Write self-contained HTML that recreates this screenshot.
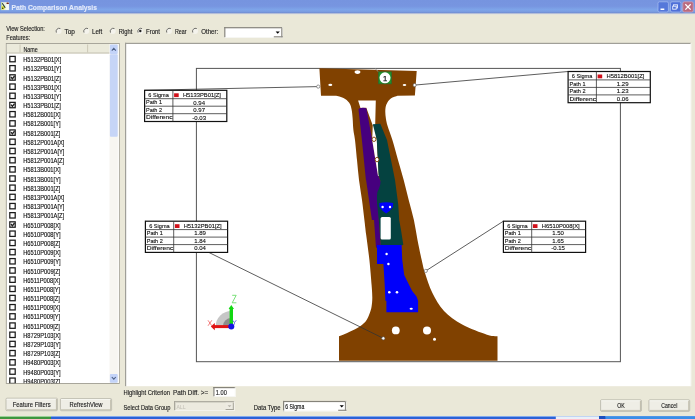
<!DOCTYPE html><html><head><meta charset="utf-8"><style>
html,body{margin:0;padding:0;width:695px;height:419px;overflow:hidden;background:#EAE8D8;}
svg{display:block;font-family:"Liberation Sans", sans-serif;will-change:transform;}
</style></head><body>
<svg width="695" height="419" viewBox="0 0 695 419">
<defs>
<clipPath id="listclip"><rect x="7" y="53.6" width="102.5" height="329.6"/></clipPath>
<clipPath id="panelclip"><rect x="126" y="44" width="565" height="342"/></clipPath>
</defs>
<rect x="0" y="0" width="695" height="419" fill="#EAE8D8"/>

<linearGradient id="tg" x1="0" y1="0" x2="0" y2="1"><stop offset="0" stop-color="#7694DF"/><stop offset="0.45" stop-color="#7795E0"/><stop offset="0.72" stop-color="#7EA5E9"/><stop offset="0.86" stop-color="#7A9CE0"/><stop offset="1" stop-color="#6A84CA"/></linearGradient>
<rect x="0" y="0" width="695" height="13.6" fill="url(#tg)"/>
<rect x="0" y="13.6" width="695" height="0.7" fill="#D8DAE4"/>
<rect x="1.2" y="2.2" width="7.9" height="7.9" fill="#EEF2E0"/><rect x="1.2" y="2.2" width="1" height="7.9" fill="#B8D890"/><ellipse cx="3.2" cy="7.8" rx="1.6" ry="2" fill="#E0E040"/><circle cx="2.7" cy="8.2" r="0.8" fill="#303010"/><path d="M2.3 3.2 L5.2 7.8" stroke="#1E3A30" stroke-width="1.1"/><ellipse cx="7.7" cy="3.3" rx="1.4" ry="0.7" fill="#6A1810"/><rect x="6.2" y="4.5" width="2.6" height="5.3" fill="#F6FCFC"/>
<text x="11.4" y="10.0" font-size="7.2" fill="#E4EAFB" text-anchor="start" font-weight="bold" textLength="85.6" lengthAdjust="spacingAndGlyphs" stroke="#E4EAFB" stroke-width="0.13" >Path Comparison Analysis</text>
<rect x="658" y="1.8" width="10.4" height="10.2" rx="1.5" fill="#5578DA" stroke="#A9BEF0" stroke-width="0.7"/><rect x="660.5" y="8.5" width="3.8" height="1.5" fill="#fff"/>
<rect x="670.5" y="1.8" width="10.4" height="10.2" rx="1.5" fill="#4F70D8" stroke="#A9BEF0" stroke-width="0.7"/><rect x="673.5" y="4.8" width="4" height="3.2" fill="none" stroke="#e8eeff" stroke-width="0.9"/><rect x="672.7" y="6.2" width="3.5" height="3" fill="#4F70D8" stroke="#e8eeff" stroke-width="0.9"/>
<rect x="682.8" y="1.8" width="10.4" height="10.2" rx="1.5" fill="#BA6A7E" stroke="#D0A8C0" stroke-width="0.7"/><path d="M685.3 4.2 L690.7 9.6 M690.7 4.2 L685.3 9.6" stroke="#fff" stroke-width="1.3"/>
<text x="6.2" y="31.2" font-size="6.6" fill="#222" text-anchor="start" font-weight="normal" textLength="38.7" lengthAdjust="spacingAndGlyphs" stroke="#222" stroke-width="0.13" >View Selection:</text>
<text x="6.2" y="40.3" font-size="6.6" fill="#222" text-anchor="start" font-weight="normal" textLength="24" lengthAdjust="spacingAndGlyphs" stroke="#222" stroke-width="0.13" >Features:</text>
<circle cx="58.6" cy="31" r="3.0" fill="#F4F3EC"/><path d="M56.4 32.6 A3.0 3.0 0 0 1 60.4 28.6" stroke="#6E6E68" stroke-width="1.0" fill="none"/>
<text x="64.4" y="33.6" font-size="6.6" fill="#222" text-anchor="start" font-weight="normal" textLength="10.5" lengthAdjust="spacingAndGlyphs" stroke="#222" stroke-width="0.13" >Top</text>
<circle cx="86.2" cy="31" r="3.0" fill="#F4F3EC"/><path d="M84.0 32.6 A3.0 3.0 0 0 1 88.0 28.6" stroke="#6E6E68" stroke-width="1.0" fill="none"/>
<text x="92" y="33.6" font-size="6.6" fill="#222" text-anchor="start" font-weight="normal" textLength="10.3" lengthAdjust="spacingAndGlyphs" stroke="#222" stroke-width="0.13" >Left</text>
<circle cx="112.7" cy="31" r="3.0" fill="#F4F3EC"/><path d="M110.5 32.6 A3.0 3.0 0 0 1 114.5 28.6" stroke="#6E6E68" stroke-width="1.0" fill="none"/>
<text x="118.8" y="33.6" font-size="6.6" fill="#222" text-anchor="start" font-weight="normal" textLength="13.5" lengthAdjust="spacingAndGlyphs" stroke="#222" stroke-width="0.13" >Right</text>
<circle cx="140.3" cy="31" r="3.0" fill="#F4F3EC"/><path d="M138.10000000000002 32.6 A3.0 3.0 0 0 1 142.10000000000002 28.6" stroke="#6E6E68" stroke-width="1.0" fill="none"/>
<text x="146" y="33.6" font-size="6.6" fill="#222" text-anchor="start" font-weight="normal" textLength="14" lengthAdjust="spacingAndGlyphs" stroke="#222" stroke-width="0.13" >Front</text>
<circle cx="169" cy="31" r="3.0" fill="#F4F3EC"/><path d="M166.8 32.6 A3.0 3.0 0 0 1 170.8 28.6" stroke="#6E6E68" stroke-width="1.0" fill="none"/>
<text x="174.9" y="33.6" font-size="6.6" fill="#222" text-anchor="start" font-weight="normal" textLength="11.6" lengthAdjust="spacingAndGlyphs" stroke="#222" stroke-width="0.13" >Rear</text>
<circle cx="195" cy="31" r="3.0" fill="#F4F3EC"/><path d="M192.8 32.6 A3.0 3.0 0 0 1 196.8 28.6" stroke="#6E6E68" stroke-width="1.0" fill="none"/>
<text x="201.2" y="33.6" font-size="6.6" fill="#222" text-anchor="start" font-weight="normal" textLength="17" lengthAdjust="spacingAndGlyphs" stroke="#222" stroke-width="0.13" >Other:</text>
<circle cx="140.3" cy="31" r="1.2" fill="#222"/>
<rect x="224.2" y="27.1" width="58.60000000000002" height="10.699999999999996" fill="#fff"/>
<rect x="224.2" y="27.1" width="58.60000000000002" height="1.2" fill="#85837A"/><rect x="224.2" y="27.1" width="1.2" height="10.699999999999996" fill="#85837A"/>
<rect x="224.2" y="37.0" width="58.60000000000002" height="0.8" fill="#F6F5F0"/><rect x="282.0" y="27.1" width="0.8" height="10.699999999999996" fill="#F6F5F0"/>
<rect x="273.8" y="36.199999999999996" width="9.0" height="1.2" fill="#8E8C84"/><rect x="281.2" y="28.1" width="1.2" height="9.099999999999996" fill="#8E8C84"/>
<path d="M275.59999999999997 31.550000000000004 L279.8 31.550000000000004 L277.7 33.85 Z" fill="#000"/>
<rect x="6.3" y="43.5" width="113" height="340" fill="#fff" stroke="#A09E92" stroke-width="0.9"/>
<rect x="6.8" y="44" width="103" height="9.4" fill="#EBEADB"/>
<rect x="6.8" y="52.4" width="103" height="1.2" fill="#CBC7B8"/>
<rect x="19.6" y="44.5" width="0.9" height="8" fill="#C9C5B4"/><rect x="87.2" y="44.5" width="0.9" height="8" fill="#C9C5B4"/>
<text x="23.4" y="51.6" font-size="6.6" fill="#222" text-anchor="start" font-weight="normal" textLength="14.3" lengthAdjust="spacingAndGlyphs" stroke="#222" stroke-width="0.13" >Name</text>
<g clip-path="url(#listclip)">
<rect x="9.8" y="56.40" width="5.4" height="5.4" fill="#fff" stroke="#1A1A1A" stroke-width="1.25"/>
<text x="23.2" y="62.15" font-size="6.5" fill="#111" text-anchor="start" font-weight="normal" textLength="38.07" lengthAdjust="spacingAndGlyphs" stroke="#111" stroke-width="0.13" >H5132PB01[X]</text>
<rect x="9.8" y="65.59" width="5.4" height="5.4" fill="#fff" stroke="#1A1A1A" stroke-width="1.25"/>
<text x="23.2" y="71.34" font-size="6.5" fill="#111" text-anchor="start" font-weight="normal" textLength="38.07" lengthAdjust="spacingAndGlyphs" stroke="#111" stroke-width="0.13" >H5132PB01[Y]</text>
<rect x="9.8" y="74.78" width="5.4" height="5.4" fill="#fff" stroke="#1A1A1A" stroke-width="1.25"/>
<path d="M11.0 76.98 L12.4 78.78 L14.5 75.98" stroke="#222" stroke-width="1.35" fill="none"/>
<text x="23.2" y="80.53" font-size="6.5" fill="#111" text-anchor="start" font-weight="normal" textLength="37.75" lengthAdjust="spacingAndGlyphs" stroke="#111" stroke-width="0.13" >H5132PB01[Z]</text>
<rect x="9.8" y="83.97" width="5.4" height="5.4" fill="#fff" stroke="#1A1A1A" stroke-width="1.25"/>
<text x="23.2" y="89.72" font-size="6.5" fill="#111" text-anchor="start" font-weight="normal" textLength="38.07" lengthAdjust="spacingAndGlyphs" stroke="#111" stroke-width="0.13" >H5133PB01[X]</text>
<rect x="9.8" y="93.16" width="5.4" height="5.4" fill="#fff" stroke="#1A1A1A" stroke-width="1.25"/>
<text x="23.2" y="98.91" font-size="6.5" fill="#111" text-anchor="start" font-weight="normal" textLength="38.07" lengthAdjust="spacingAndGlyphs" stroke="#111" stroke-width="0.13" >H5133PB01[Y]</text>
<rect x="9.8" y="102.35" width="5.4" height="5.4" fill="#fff" stroke="#1A1A1A" stroke-width="1.25"/>
<path d="M11.0 104.55 L12.4 106.35 L14.5 103.55" stroke="#222" stroke-width="1.35" fill="none"/>
<text x="23.2" y="108.10" font-size="6.5" fill="#111" text-anchor="start" font-weight="normal" textLength="37.75" lengthAdjust="spacingAndGlyphs" stroke="#111" stroke-width="0.13" >H5133PB01[Z]</text>
<rect x="9.8" y="111.54" width="5.4" height="5.4" fill="#fff" stroke="#1A1A1A" stroke-width="1.25"/>
<text x="23.2" y="117.29" font-size="6.5" fill="#111" text-anchor="start" font-weight="normal" textLength="37.43" lengthAdjust="spacingAndGlyphs" stroke="#111" stroke-width="0.13" >H5812B001[X]</text>
<rect x="9.8" y="120.73" width="5.4" height="5.4" fill="#fff" stroke="#1A1A1A" stroke-width="1.25"/>
<text x="23.2" y="126.48" font-size="6.5" fill="#111" text-anchor="start" font-weight="normal" textLength="37.43" lengthAdjust="spacingAndGlyphs" stroke="#111" stroke-width="0.13" >H5812B001[Y]</text>
<rect x="9.8" y="129.92" width="5.4" height="5.4" fill="#fff" stroke="#1A1A1A" stroke-width="1.25"/>
<path d="M11.0 132.12 L12.4 133.92 L14.5 131.12" stroke="#222" stroke-width="1.35" fill="none"/>
<text x="23.2" y="135.67" font-size="6.5" fill="#111" text-anchor="start" font-weight="normal" textLength="37.11" lengthAdjust="spacingAndGlyphs" stroke="#111" stroke-width="0.13" >H5812B001[Z]</text>
<rect x="9.8" y="139.11" width="5.4" height="5.4" fill="#fff" stroke="#1A1A1A" stroke-width="1.25"/>
<text x="23.2" y="144.86" font-size="6.5" fill="#111" text-anchor="start" font-weight="normal" textLength="41.27" lengthAdjust="spacingAndGlyphs" stroke="#111" stroke-width="0.13" >H5812P001A[X]</text>
<rect x="9.8" y="148.30" width="5.4" height="5.4" fill="#fff" stroke="#1A1A1A" stroke-width="1.25"/>
<text x="23.2" y="154.05" font-size="6.5" fill="#111" text-anchor="start" font-weight="normal" textLength="41.27" lengthAdjust="spacingAndGlyphs" stroke="#111" stroke-width="0.13" >H5812P001A[Y]</text>
<rect x="9.8" y="157.49" width="5.4" height="5.4" fill="#fff" stroke="#1A1A1A" stroke-width="1.25"/>
<text x="23.2" y="163.24" font-size="6.5" fill="#111" text-anchor="start" font-weight="normal" textLength="40.95" lengthAdjust="spacingAndGlyphs" stroke="#111" stroke-width="0.13" >H5812P001A[Z]</text>
<rect x="9.8" y="166.68" width="5.4" height="5.4" fill="#fff" stroke="#1A1A1A" stroke-width="1.25"/>
<text x="23.2" y="172.43" font-size="6.5" fill="#111" text-anchor="start" font-weight="normal" textLength="37.43" lengthAdjust="spacingAndGlyphs" stroke="#111" stroke-width="0.13" >H5813B001[X]</text>
<rect x="9.8" y="175.87" width="5.4" height="5.4" fill="#fff" stroke="#1A1A1A" stroke-width="1.25"/>
<text x="23.2" y="181.62" font-size="6.5" fill="#111" text-anchor="start" font-weight="normal" textLength="37.43" lengthAdjust="spacingAndGlyphs" stroke="#111" stroke-width="0.13" >H5813B001[Y]</text>
<rect x="9.8" y="185.06" width="5.4" height="5.4" fill="#fff" stroke="#1A1A1A" stroke-width="1.25"/>
<text x="23.2" y="190.81" font-size="6.5" fill="#111" text-anchor="start" font-weight="normal" textLength="37.11" lengthAdjust="spacingAndGlyphs" stroke="#111" stroke-width="0.13" >H5813B001[Z]</text>
<rect x="9.8" y="194.25" width="5.4" height="5.4" fill="#fff" stroke="#1A1A1A" stroke-width="1.25"/>
<text x="23.2" y="200.00" font-size="6.5" fill="#111" text-anchor="start" font-weight="normal" textLength="41.27" lengthAdjust="spacingAndGlyphs" stroke="#111" stroke-width="0.13" >H5813P001A[X]</text>
<rect x="9.8" y="203.44" width="5.4" height="5.4" fill="#fff" stroke="#1A1A1A" stroke-width="1.25"/>
<text x="23.2" y="209.19" font-size="6.5" fill="#111" text-anchor="start" font-weight="normal" textLength="41.27" lengthAdjust="spacingAndGlyphs" stroke="#111" stroke-width="0.13" >H5813P001A[Y]</text>
<rect x="9.8" y="212.63" width="5.4" height="5.4" fill="#fff" stroke="#1A1A1A" stroke-width="1.25"/>
<text x="23.2" y="218.38" font-size="6.5" fill="#111" text-anchor="start" font-weight="normal" textLength="40.95" lengthAdjust="spacingAndGlyphs" stroke="#111" stroke-width="0.13" >H5813P001A[Z]</text>
<rect x="9.8" y="221.82" width="5.4" height="5.4" fill="#fff" stroke="#1A1A1A" stroke-width="1.25"/>
<path d="M11.0 224.02 L12.4 225.82 L14.5 223.02" stroke="#222" stroke-width="1.35" fill="none"/>
<text x="23.2" y="227.57" font-size="6.5" fill="#111" text-anchor="start" font-weight="normal" textLength="37.43" lengthAdjust="spacingAndGlyphs" stroke="#111" stroke-width="0.13" >H6510P008[X]</text>
<rect x="9.8" y="231.01" width="5.4" height="5.4" fill="#fff" stroke="#1A1A1A" stroke-width="1.25"/>
<text x="23.2" y="236.76" font-size="6.5" fill="#111" text-anchor="start" font-weight="normal" textLength="37.43" lengthAdjust="spacingAndGlyphs" stroke="#111" stroke-width="0.13" >H6510P008[Y]</text>
<rect x="9.8" y="240.20" width="5.4" height="5.4" fill="#fff" stroke="#1A1A1A" stroke-width="1.25"/>
<text x="23.2" y="245.95" font-size="6.5" fill="#111" text-anchor="start" font-weight="normal" textLength="37.11" lengthAdjust="spacingAndGlyphs" stroke="#111" stroke-width="0.13" >H6510P008[Z]</text>
<rect x="9.8" y="249.39" width="5.4" height="5.4" fill="#fff" stroke="#1A1A1A" stroke-width="1.25"/>
<text x="23.2" y="255.14" font-size="6.5" fill="#111" text-anchor="start" font-weight="normal" textLength="37.43" lengthAdjust="spacingAndGlyphs" stroke="#111" stroke-width="0.13" >H6510P009[X]</text>
<rect x="9.8" y="258.58" width="5.4" height="5.4" fill="#fff" stroke="#1A1A1A" stroke-width="1.25"/>
<text x="23.2" y="264.33" font-size="6.5" fill="#111" text-anchor="start" font-weight="normal" textLength="37.43" lengthAdjust="spacingAndGlyphs" stroke="#111" stroke-width="0.13" >H6510P009[Y]</text>
<rect x="9.8" y="267.77" width="5.4" height="5.4" fill="#fff" stroke="#1A1A1A" stroke-width="1.25"/>
<text x="23.2" y="273.52" font-size="6.5" fill="#111" text-anchor="start" font-weight="normal" textLength="37.11" lengthAdjust="spacingAndGlyphs" stroke="#111" stroke-width="0.13" >H6510P009[Z]</text>
<rect x="9.8" y="276.96" width="5.4" height="5.4" fill="#fff" stroke="#1A1A1A" stroke-width="1.25"/>
<text x="23.2" y="282.71" font-size="6.5" fill="#111" text-anchor="start" font-weight="normal" textLength="37.01" lengthAdjust="spacingAndGlyphs" stroke="#111" stroke-width="0.13" >H6511P008[X]</text>
<rect x="9.8" y="286.15" width="5.4" height="5.4" fill="#fff" stroke="#1A1A1A" stroke-width="1.25"/>
<text x="23.2" y="291.90" font-size="6.5" fill="#111" text-anchor="start" font-weight="normal" textLength="37.01" lengthAdjust="spacingAndGlyphs" stroke="#111" stroke-width="0.13" >H6511P008[Y]</text>
<rect x="9.8" y="295.34" width="5.4" height="5.4" fill="#fff" stroke="#1A1A1A" stroke-width="1.25"/>
<text x="23.2" y="301.09" font-size="6.5" fill="#111" text-anchor="start" font-weight="normal" textLength="36.68" lengthAdjust="spacingAndGlyphs" stroke="#111" stroke-width="0.13" >H6511P008[Z]</text>
<rect x="9.8" y="304.53" width="5.4" height="5.4" fill="#fff" stroke="#1A1A1A" stroke-width="1.25"/>
<text x="23.2" y="310.28" font-size="6.5" fill="#111" text-anchor="start" font-weight="normal" textLength="37.01" lengthAdjust="spacingAndGlyphs" stroke="#111" stroke-width="0.13" >H6511P009[X]</text>
<rect x="9.8" y="313.72" width="5.4" height="5.4" fill="#fff" stroke="#1A1A1A" stroke-width="1.25"/>
<text x="23.2" y="319.47" font-size="6.5" fill="#111" text-anchor="start" font-weight="normal" textLength="37.01" lengthAdjust="spacingAndGlyphs" stroke="#111" stroke-width="0.13" >H6511P009[Y]</text>
<rect x="9.8" y="322.91" width="5.4" height="5.4" fill="#fff" stroke="#1A1A1A" stroke-width="1.25"/>
<text x="23.2" y="328.66" font-size="6.5" fill="#111" text-anchor="start" font-weight="normal" textLength="36.68" lengthAdjust="spacingAndGlyphs" stroke="#111" stroke-width="0.13" >H6511P009[Z]</text>
<rect x="9.8" y="332.10" width="5.4" height="5.4" fill="#fff" stroke="#1A1A1A" stroke-width="1.25"/>
<text x="23.2" y="337.85" font-size="6.5" fill="#111" text-anchor="start" font-weight="normal" textLength="37.43" lengthAdjust="spacingAndGlyphs" stroke="#111" stroke-width="0.13" >H8729P103[X]</text>
<rect x="9.8" y="341.29" width="5.4" height="5.4" fill="#fff" stroke="#1A1A1A" stroke-width="1.25"/>
<text x="23.2" y="347.04" font-size="6.5" fill="#111" text-anchor="start" font-weight="normal" textLength="37.43" lengthAdjust="spacingAndGlyphs" stroke="#111" stroke-width="0.13" >H8729P103[Y]</text>
<rect x="9.8" y="350.48" width="5.4" height="5.4" fill="#fff" stroke="#1A1A1A" stroke-width="1.25"/>
<text x="23.2" y="356.23" font-size="6.5" fill="#111" text-anchor="start" font-weight="normal" textLength="37.11" lengthAdjust="spacingAndGlyphs" stroke="#111" stroke-width="0.13" >H8729P103[Z]</text>
<rect x="9.8" y="359.67" width="5.4" height="5.4" fill="#fff" stroke="#1A1A1A" stroke-width="1.25"/>
<text x="23.2" y="365.42" font-size="6.5" fill="#111" text-anchor="start" font-weight="normal" textLength="37.43" lengthAdjust="spacingAndGlyphs" stroke="#111" stroke-width="0.13" >H9480P003[X]</text>
<rect x="9.8" y="368.86" width="5.4" height="5.4" fill="#fff" stroke="#1A1A1A" stroke-width="1.25"/>
<text x="23.2" y="374.61" font-size="6.5" fill="#111" text-anchor="start" font-weight="normal" textLength="37.43" lengthAdjust="spacingAndGlyphs" stroke="#111" stroke-width="0.13" >H9480P003[Y]</text>
<rect x="9.8" y="378.05" width="5.4" height="5.4" fill="#fff" stroke="#1A1A1A" stroke-width="1.25"/>
<text x="23.2" y="383.80" font-size="6.5" fill="#111" text-anchor="start" font-weight="normal" textLength="37.11" lengthAdjust="spacingAndGlyphs" stroke="#111" stroke-width="0.13" >H9480P003[Z]</text>
</g>
<rect x="109.5" y="44.3" width="9.5" height="338.7" fill="#F7F6F1"/>
<rect x="117.6" y="44.3" width="1.4" height="338.7" fill="#FBFBF8"/>
<rect x="109.9" y="44.6" width="7.8" height="9.4" rx="1" fill="#C3D3F8"/><path d="M111.8 50.6 L113.8 48.4 L115.8 50.6" stroke="#4D6185" stroke-width="1.1" fill="none"/>
<rect x="109.9" y="54.2" width="7.8" height="82.6" rx="1" fill="#C6D5F7"/>
<rect x="109.9" y="374" width="7.8" height="8.8" rx="1" fill="#C3D3F8"/><path d="M111.8 377 L113.8 379.2 L115.8 377" stroke="#4D6185" stroke-width="1.1" fill="none"/>
<rect x="125" y="43" width="566" height="343.2" fill="#fff"/>
<rect x="125" y="42.8" width="566" height="1.2" fill="#A09F98"/><rect x="125" y="42.8" width="1.2" height="343.4" fill="#A09F98"/>
<rect x="690.5" y="43" width="1" height="343.2" fill="#F4F3EE"/>
<rect x="6" y="398.2" width="51.4" height="12.5" rx="1" fill="#EFEEE6" stroke="#A3A195" stroke-width="0.6"/>
<rect x="6.6" y="398.8" width="50.199999999999996" height="0.8" fill="#FBFBF6"/>
<rect x="6.6" y="409.2" width="50.199999999999996" height="1.2" fill="#C9C6B6"/>
<rect x="55.9" y="399.0" width="1.2" height="11.3" fill="#C2BFAF"/>
<text x="31.7" y="406.75" font-size="6.5" fill="#222" text-anchor="middle" font-weight="normal" textLength="37.9" lengthAdjust="spacingAndGlyphs" stroke="#222" stroke-width="0.13" >Feature Filters</text>
<rect x="60.4" y="398.6" width="51.199999999999996" height="12.099999999999966" rx="1" fill="#EFEEE6" stroke="#A3A195" stroke-width="0.6"/>
<rect x="61.0" y="399.20000000000005" width="49.99999999999999" height="0.8" fill="#FBFBF6"/>
<rect x="61.0" y="409.2" width="49.99999999999999" height="1.2" fill="#C9C6B6"/>
<rect x="110.1" y="399.40000000000003" width="1.2" height="10.899999999999967" fill="#C2BFAF"/>
<text x="86.0" y="406.95" font-size="6.5" fill="#222" text-anchor="middle" font-weight="normal" textLength="32.8" lengthAdjust="spacingAndGlyphs" stroke="#222" stroke-width="0.13" >RefreshView</text>
<rect x="600.6" y="399.8" width="40.799999999999955" height="11.599999999999966" rx="1" fill="#EFEEE6" stroke="#A3A195" stroke-width="0.6"/>
<rect x="601.2" y="400.40000000000003" width="39.59999999999995" height="0.8" fill="#FBFBF6"/>
<rect x="601.2" y="409.9" width="39.59999999999995" height="1.2" fill="#C9C6B6"/>
<rect x="639.9" y="400.6" width="1.2" height="10.399999999999967" fill="#C2BFAF"/>
<text x="621.0" y="407.90000000000003" font-size="6.5" fill="#222" text-anchor="middle" font-weight="normal" textLength="7.5" lengthAdjust="spacingAndGlyphs" stroke="#222" stroke-width="0.13" >OK</text>
<rect x="648.9" y="399.8" width="40.80000000000007" height="11.599999999999966" rx="1" fill="#EFEEE6" stroke="#A3A195" stroke-width="0.6"/>
<rect x="649.5" y="400.40000000000003" width="39.600000000000065" height="0.8" fill="#FBFBF6"/>
<rect x="649.5" y="409.9" width="39.600000000000065" height="1.2" fill="#C9C6B6"/>
<rect x="688.2" y="400.6" width="1.2" height="10.399999999999967" fill="#C2BFAF"/>
<text x="669.3" y="407.90000000000003" font-size="6.5" fill="#222" text-anchor="middle" font-weight="normal" textLength="16" lengthAdjust="spacingAndGlyphs" stroke="#222" stroke-width="0.13" >Cancel</text>
<text x="123.5" y="394.6" font-size="6.6" fill="#222" text-anchor="start" font-weight="normal" textLength="46.4" lengthAdjust="spacingAndGlyphs" stroke="#222" stroke-width="0.13" >Highlight Criterion</text>
<text x="173" y="394.6" font-size="6.6" fill="#222" text-anchor="start" font-weight="normal" textLength="35.3" lengthAdjust="spacingAndGlyphs" stroke="#222" stroke-width="0.13" >Path Diff. &gt;=</text>
<rect x="213.3" y="387" width="22.299999999999983" height="9.800000000000011" fill="#fff"/>
<rect x="213.3" y="387" width="22.299999999999983" height="1.2" fill="#85837A"/><rect x="213.3" y="387" width="1.2" height="9.800000000000011" fill="#85837A"/>
<rect x="213.3" y="396.0" width="22.299999999999983" height="0.8" fill="#F6F5F0"/><rect x="234.79999999999998" y="387" width="0.8" height="9.800000000000011" fill="#F6F5F0"/>
<text x="215.8" y="394.5" font-size="6.6" fill="#222" text-anchor="start" font-weight="normal" textLength="11" lengthAdjust="spacingAndGlyphs" stroke="#222" stroke-width="0.13" >1.00</text>
<text x="123.5" y="409.7" font-size="6.6" fill="#222" text-anchor="start" font-weight="normal" textLength="46.9" lengthAdjust="spacingAndGlyphs" stroke="#222" stroke-width="0.13" >Select Data Group</text>
<rect x="174" y="401.1" width="60.5" height="9.8" fill="#ECEADF"/>
<rect x="174" y="401.1" width="60.5" height="1.1" fill="#A9A79C"/><rect x="174" y="401.1" width="1.1" height="9.8" fill="#A9A79C"/>
<rect x="175.2" y="402.3" width="58.4" height="0.7" fill="#D2D0C4"/><rect x="175.2" y="402.3" width="0.7" height="8" fill="#D2D0C4"/>
<rect x="174" y="410.3" width="60.5" height="0.7" fill="#F8F7F2"/><rect x="233.9" y="401.1" width="0.7" height="9.8" fill="#F8F7F2"/>
<rect x="225.6" y="402.6" width="7.6" height="7.2" fill="#EDEBE2"/><rect x="225.6" y="409" width="8" height="1" fill="#A5A398"/><rect x="232.8" y="402.6" width="1" height="7.4" fill="#A5A398"/>
<path d="M227.6 405.2 L231.4 405.2 L229.5 407.3 Z" fill="#B8B6AC"/>
<text x="176.5" y="408.6" font-size="6.0" fill="#C8C6BC" text-anchor="start" font-weight="normal" textLength="9" lengthAdjust="spacingAndGlyphs" stroke="#C8C6BC" stroke-width="0.13" >ALL</text>
<text x="253.7" y="409.6" font-size="6.6" fill="#222" text-anchor="start" font-weight="normal" textLength="26.9" lengthAdjust="spacingAndGlyphs" stroke="#222" stroke-width="0.13" >Data Type</text>
<rect x="283" y="400.9" width="63.5" height="10.400000000000034" fill="#fff"/>
<rect x="283" y="400.9" width="63.5" height="1.2" fill="#85837A"/><rect x="283" y="400.9" width="1.2" height="10.400000000000034" fill="#85837A"/>
<rect x="283" y="410.5" width="63.5" height="0.8" fill="#F6F5F0"/><rect x="345.7" y="400.9" width="0.8" height="10.400000000000034" fill="#F6F5F0"/>
<rect x="338.2" y="409.7" width="8.300000000000011" height="1.2" fill="#8E8C84"/><rect x="344.9" y="401.9" width="1.2" height="8.800000000000034" fill="#8E8C84"/>
<path d="M339.65 405.20000000000005 L343.85 405.20000000000005 L341.75 407.5 Z" fill="#000"/>
<text x="285.3" y="408.8" font-size="6.3" fill="#111" text-anchor="start" font-weight="normal" textLength="19" lengthAdjust="spacingAndGlyphs" stroke="#111" stroke-width="0.13" >6 Sigma</text>
<rect x="0" y="416" width="695" height="3" fill="#2C62D6"/>
<rect x="0" y="416" width="695" height="0.9" fill="#8DB2F0"/>
<rect x="0" y="416" width="51" height="3" fill="#3E963E"/><rect x="0" y="416" width="51" height="0.9" fill="#A6D8A2"/>
<rect x="555.8" y="416.4" width="43.2" height="2.6" fill="#EAF0F8"/><rect x="599" y="416" width="6.5" height="3" fill="#1B4FBF"/><rect x="605.5" y="416.3" width="89.5" height="2.7" fill="#3A8EE6"/>
<g clip-path="url(#panelclip)">
<rect x="196.4" y="68.4" width="424" height="293.3" fill="none" stroke="#555" stroke-width="1"/>
<path d="M319.4 68.3 L416.7 71.1 L414.9 95.5 L397.5 95.8 C396.38 96.25 392.63 97.10 390.8 98.5 C388.97 99.90 387.42 102.13 386.5 104.2 C385.58 106.27 385.40 108.52 385.3 110.9 C385.20 113.28 385.52 115.98 385.9 118.5 C386.28 121.02 386.52 122.42 387.6 126 C388.68 129.58 390.67 134.33 392.4 140 C394.13 145.67 396.12 153.33 398 160 C399.88 166.67 401.92 173.33 403.7 180 C405.48 186.67 407.00 193.33 408.7 200 C410.40 206.67 412.43 213.33 413.9 220 C415.37 226.67 416.20 233.33 417.5 240 C418.80 246.67 420.45 254.50 421.7 260 C422.95 265.50 423.23 267.55 425 273 C426.77 278.45 429.13 286.37 432.3 292.7 C435.47 299.03 439.02 305.68 444 311 C448.98 316.32 455.03 320.63 462.2 324.6 C469.37 328.57 481.12 332.87 487 334.8 C492.88 336.73 495.75 335.97 497.5 336.2 L497.5 360.8 L339 360.8 L339 336.2 C340.37 335.67 344.15 334.37 347.2 333 C350.25 331.63 354.67 329.50 357.3 328 C359.93 326.50 361.45 325.33 363 324 C364.55 322.67 365.47 321.83 366.6 320 C367.73 318.17 368.98 315.17 369.8 313 C370.62 310.83 371.08 309.50 371.5 307 C371.92 304.50 372.28 301.67 372.3 298 C372.32 294.33 372.08 291.33 371.6 285 C371.12 278.67 370.30 268.33 369.4 260 C368.50 251.67 367.03 241.67 366.2 235 C365.37 228.33 365.10 225.83 364.4 220 C363.70 214.17 362.90 206.67 362 200 C361.10 193.33 359.83 186.67 359 180 C358.17 173.33 357.67 166.67 357 160 C356.33 153.33 355.60 145.00 355 140 C354.40 135.00 353.80 133.67 353.4 130 C353.00 126.33 352.90 121.42 352.6 118 C352.30 114.58 352.17 112.03 351.6 109.5 C351.03 106.97 350.55 104.72 349.2 102.8 C347.85 100.88 345.70 99.18 343.5 98 C341.30 96.82 337.25 96.08 336 95.7 L321 95.7 Z" fill="#804100"/>
<path d="M358.1 100.5 L375.8 100.5 L375.2 124.5 L372.6 125 L366.3 107.7 L360.5 108.1 Z" fill="#fff"/>
<path d="M358.5 109.5 Q358.9 107.9 362.4 107.7 Q366 107.5 366.5 108.8 L372.2 140 L378 175 L381.5 183 L379 193 L378.8 220 L381 247.7 L376 247.7 L374 220 L371.9 220 L369 200 L366.1 180 L365.9 180 L361.9 140 Z" fill="#46007E"/>
<path d="M372.8 124.2 L375.5 124 L376.8 140 L378.8 176 L378 176 L372.2 140 Z" fill="#fff"/>
<path d="M372.8 124.2 L380.3 123.7 L387 140 L395 180 L398.3 205 L399.2 220 L401 230 L403.3 244.7 Q392 250.8 380.9 246.3 L378.8 220 L377.2 205 Q376.6 196 377.4 192 Q380.6 186 380.5 181 L378.6 175 L376.8 140 Z" fill="#044240"/>
<ellipse cx="374" cy="139.3" rx="1.9" ry="2.2" fill="#fff" stroke="#804100" stroke-width="0.9"/>
<ellipse cx="377" cy="159.6" rx="1.9" ry="2.2" fill="#fff" stroke="#804100" stroke-width="0.9"/>
<path d="M379.3 203 Q386 201.5 393.2 203 L393 207 Q390 211 386.2 213.4 Q382 211 379.5 207 Z" fill="#0000FA"/>
<circle cx="382.6" cy="207" r="1.2" fill="#fff"/><circle cx="390" cy="207" r="1.2" fill="#fff"/>
<rect x="380.6" y="217" width="10.2" height="22.6" rx="1.5" fill="#fff"/>
<path d="M377 245 L401.6 245 L402.2 259.5 L404.2 275 L406.9 280.4 L409.5 285.7 L412.2 291.1 L416.5 296.5 L418.1 300.8 L418.1 312.3 L386.4 312.3 L386.4 300.8 L385.4 300.8 L384.6 283 L383.4 264 L377 264 Z" fill="#0000FA"/>
<ellipse cx="386.6" cy="254" rx="1.2" ry="1.2" fill="#fff"/>
<ellipse cx="388.4" cy="264" rx="1.2" ry="1.2" fill="#fff"/>
<ellipse cx="389.3" cy="292.2" rx="1.3" ry="1.3" fill="#fff"/>
<ellipse cx="397" cy="292.2" rx="1.3" ry="1.3" fill="#fff"/>
<ellipse cx="411.2" cy="308.7" rx="1.6" ry="1.0" fill="#fff"/>
<ellipse cx="357.5" cy="72.1" rx="2.9" ry="1.8" fill="#fff"/>
<ellipse cx="330.3" cy="84.9" rx="2.0" ry="1.1" fill="#fff"/>
<ellipse cx="404.5" cy="85.1" rx="1.8" ry="1.0" fill="#fff"/>
<ellipse cx="395.8" cy="330.4" rx="3.9" ry="3.9" fill="#fff"/>
<ellipse cx="427" cy="330.6" rx="4" ry="4" fill="#fff"/>
<ellipse cx="434.5" cy="339.2" rx="1.5" ry="1.5" fill="#fff"/>
<line x1="144.6" y1="90.3" x2="318.2" y2="86.6" stroke="#333" stroke-width="0.8"/>
<line x1="414.6" y1="85.1" x2="568.1" y2="71.5" stroke="#333" stroke-width="0.8"/>
<line x1="145.4" y1="221.2" x2="383.3" y2="338.3" stroke="#333" stroke-width="0.8"/>
<line x1="425.8" y1="270.9" x2="503.4" y2="221.2" stroke="#333" stroke-width="0.8"/>
<circle cx="318.2" cy="86.6" r="1.6" fill="#fff" stroke="#555" stroke-width="0.6"/>
<circle cx="414.6" cy="85.1" r="1.6" fill="#fff" stroke="#555" stroke-width="0.6"/>
<circle cx="383.3" cy="338.3" r="1.6" fill="#fff" stroke="#555" stroke-width="0.6"/>
<circle cx="425.8" cy="270.9" r="1.6" fill="#fff" stroke="#555" stroke-width="0.6"/>
<line x1="378.5" y1="71.8" x2="375" y2="68.5" stroke="#999" stroke-width="0.8"/>
<rect x="378.6" y="71.9" width="12.8" height="11.9" fill="#20922A" stroke="#2C6A2E" stroke-width="0.8"/>
<circle cx="385" cy="77.85" r="5.5" fill="#fff"/>
<text x="385.1" y="80.7" font-size="7.6" text-anchor="middle" fill="#222" stroke="#222" stroke-width="0.25">1</text>
<rect x="144.6" y="90.3" width="82.2" height="31.2" fill="#fff" stroke="#111" stroke-width="1.2"/>
<line x1="144.6" y1="98.7" x2="226.8" y2="98.7" stroke="#333" stroke-width="0.8"/>
<line x1="144.6" y1="106.2" x2="226.8" y2="106.2" stroke="#333" stroke-width="0.8"/>
<line x1="144.6" y1="113.69999999999999" x2="226.8" y2="113.69999999999999" stroke="#333" stroke-width="0.8"/>
<line x1="172.9" y1="90.3" x2="172.9" y2="121.5" stroke="#333" stroke-width="0.8"/>
<text x="158.6" y="96.6" font-size="6" text-anchor="middle" textLength="20.5" lengthAdjust="spacingAndGlyphs" fill="#111" stroke="#111" stroke-width="0.12">6 Sigma</text>
<text x="146.0" y="104.4" font-size="6" textLength="16" lengthAdjust="spacingAndGlyphs" fill="#111" stroke="#111" stroke-width="0.12">Path 1</text>
<text x="146.0" y="111.9" font-size="6" textLength="16" lengthAdjust="spacingAndGlyphs" fill="#111" stroke="#111" stroke-width="0.12">Path 2</text>
<text x="146.0" y="119.39999999999999" font-size="6" textLength="26.5" lengthAdjust="spacingAndGlyphs" fill="#111" stroke="#111" stroke-width="0.12">Differenc</text>
<rect x="174.1" y="93.3" width="4.6" height="3.8" fill="#D0101A"/>
<text x="201.9" y="96.6" font-size="6" text-anchor="middle" textLength="38" lengthAdjust="spacingAndGlyphs" fill="#111" stroke="#111" stroke-width="0.12">H5133PB01[Z]</text>
<text x="199.20000000000002" y="104.5" font-size="6" text-anchor="middle" fill="#111" stroke="#111" stroke-width="0.12">0.94</text>
<text x="199.20000000000002" y="112.0" font-size="6" text-anchor="middle" fill="#111" stroke="#111" stroke-width="0.12">0.97</text>
<text x="199.20000000000002" y="119.49999999999999" font-size="6" text-anchor="middle" fill="#111" stroke="#111" stroke-width="0.12">-0.03</text>
<rect x="568.1" y="71.5" width="82.2" height="31.2" fill="#fff" stroke="#111" stroke-width="1.2"/>
<line x1="568.1" y1="79.9" x2="650.3000000000001" y2="79.9" stroke="#333" stroke-width="0.8"/>
<line x1="568.1" y1="87.4" x2="650.3000000000001" y2="87.4" stroke="#333" stroke-width="0.8"/>
<line x1="568.1" y1="94.9" x2="650.3000000000001" y2="94.9" stroke="#333" stroke-width="0.8"/>
<line x1="596.4" y1="71.5" x2="596.4" y2="102.7" stroke="#333" stroke-width="0.8"/>
<text x="582.1" y="77.8" font-size="6" text-anchor="middle" textLength="20.5" lengthAdjust="spacingAndGlyphs" fill="#111" stroke="#111" stroke-width="0.12">6 Sigma</text>
<text x="569.5" y="85.60000000000001" font-size="6" textLength="16" lengthAdjust="spacingAndGlyphs" fill="#111" stroke="#111" stroke-width="0.12">Path 1</text>
<text x="569.5" y="93.10000000000001" font-size="6" textLength="16" lengthAdjust="spacingAndGlyphs" fill="#111" stroke="#111" stroke-width="0.12">Path 2</text>
<text x="569.5" y="100.60000000000001" font-size="6" textLength="26.5" lengthAdjust="spacingAndGlyphs" fill="#111" stroke="#111" stroke-width="0.12">Differenc</text>
<rect x="597.6" y="74.5" width="4.6" height="3.8" fill="#D0101A"/>
<text x="625.4" y="77.8" font-size="6" text-anchor="middle" textLength="38" lengthAdjust="spacingAndGlyphs" fill="#111" stroke="#111" stroke-width="0.12">H5812B001[Z]</text>
<text x="622.6999999999999" y="85.7" font-size="6" text-anchor="middle" fill="#111" stroke="#111" stroke-width="0.12">1.29</text>
<text x="622.6999999999999" y="93.2" font-size="6" text-anchor="middle" fill="#111" stroke="#111" stroke-width="0.12">1.23</text>
<text x="622.6999999999999" y="100.7" font-size="6" text-anchor="middle" fill="#111" stroke="#111" stroke-width="0.12">0.06</text>
<rect x="145.4" y="221.2" width="82.2" height="31.2" fill="#fff" stroke="#111" stroke-width="1.2"/>
<line x1="145.4" y1="229.6" x2="227.60000000000002" y2="229.6" stroke="#333" stroke-width="0.8"/>
<line x1="145.4" y1="237.1" x2="227.60000000000002" y2="237.1" stroke="#333" stroke-width="0.8"/>
<line x1="145.4" y1="244.6" x2="227.60000000000002" y2="244.6" stroke="#333" stroke-width="0.8"/>
<line x1="173.70000000000002" y1="221.2" x2="173.70000000000002" y2="252.39999999999998" stroke="#333" stroke-width="0.8"/>
<text x="159.4" y="227.5" font-size="6" text-anchor="middle" textLength="20.5" lengthAdjust="spacingAndGlyphs" fill="#111" stroke="#111" stroke-width="0.12">6 Sigma</text>
<text x="146.8" y="235.29999999999998" font-size="6" textLength="16" lengthAdjust="spacingAndGlyphs" fill="#111" stroke="#111" stroke-width="0.12">Path 1</text>
<text x="146.8" y="242.79999999999998" font-size="6" textLength="16" lengthAdjust="spacingAndGlyphs" fill="#111" stroke="#111" stroke-width="0.12">Path 2</text>
<text x="146.8" y="250.29999999999998" font-size="6" textLength="26.5" lengthAdjust="spacingAndGlyphs" fill="#111" stroke="#111" stroke-width="0.12">Differenc</text>
<rect x="174.9" y="224.2" width="4.6" height="3.8" fill="#D0101A"/>
<text x="202.70000000000002" y="227.5" font-size="6" text-anchor="middle" textLength="38" lengthAdjust="spacingAndGlyphs" fill="#111" stroke="#111" stroke-width="0.12">H5132PB01[Z]</text>
<text x="200.00000000000003" y="235.4" font-size="6" text-anchor="middle" fill="#111" stroke="#111" stroke-width="0.12">1.89</text>
<text x="200.00000000000003" y="242.9" font-size="6" text-anchor="middle" fill="#111" stroke="#111" stroke-width="0.12">1.84</text>
<text x="200.00000000000003" y="250.4" font-size="6" text-anchor="middle" fill="#111" stroke="#111" stroke-width="0.12">0.04</text>
<rect x="503.4" y="221.2" width="82.2" height="31.2" fill="#fff" stroke="#111" stroke-width="1.2"/>
<line x1="503.4" y1="229.6" x2="585.6" y2="229.6" stroke="#333" stroke-width="0.8"/>
<line x1="503.4" y1="237.1" x2="585.6" y2="237.1" stroke="#333" stroke-width="0.8"/>
<line x1="503.4" y1="244.6" x2="585.6" y2="244.6" stroke="#333" stroke-width="0.8"/>
<line x1="531.6999999999999" y1="221.2" x2="531.6999999999999" y2="252.39999999999998" stroke="#333" stroke-width="0.8"/>
<text x="517.4" y="227.5" font-size="6" text-anchor="middle" textLength="20.5" lengthAdjust="spacingAndGlyphs" fill="#111" stroke="#111" stroke-width="0.12">6 Sigma</text>
<text x="504.79999999999995" y="235.29999999999998" font-size="6" textLength="16" lengthAdjust="spacingAndGlyphs" fill="#111" stroke="#111" stroke-width="0.12">Path 1</text>
<text x="504.79999999999995" y="242.79999999999998" font-size="6" textLength="16" lengthAdjust="spacingAndGlyphs" fill="#111" stroke="#111" stroke-width="0.12">Path 2</text>
<text x="504.79999999999995" y="250.29999999999998" font-size="6" textLength="26.5" lengthAdjust="spacingAndGlyphs" fill="#111" stroke="#111" stroke-width="0.12">Differenc</text>
<rect x="532.9" y="224.2" width="4.6" height="3.8" fill="#D0101A"/>
<text x="560.6999999999999" y="227.5" font-size="6" text-anchor="middle" textLength="38" lengthAdjust="spacingAndGlyphs" fill="#111" stroke="#111" stroke-width="0.12">H6510P008[X]</text>
<text x="557.9999999999999" y="235.4" font-size="6" text-anchor="middle" fill="#111" stroke="#111" stroke-width="0.12">1.50</text>
<text x="557.9999999999999" y="242.9" font-size="6" text-anchor="middle" fill="#111" stroke="#111" stroke-width="0.12">1.65</text>
<text x="557.9999999999999" y="250.4" font-size="6" text-anchor="middle" fill="#111" stroke="#111" stroke-width="0.12">-0.15</text>
<path d="M231.3 326.6 L215.7 326.6 A15.6 15.6 0 0 1 231.3 311 Z" fill="#C6C6C6"/>
<path d="M231.3 326.6 L222.8 326.6 A8.5 8.5 0 0 1 231.3 318.1 Z" fill="#8C8C8C"/>
<rect x="229.6" y="307.5" width="3.4" height="19" fill="#12D812"/><path d="M228.6 309 L231.3 304.9 L234 309 Z" fill="#12D812"/>
<rect x="214" y="325.1" width="17.3" height="3" fill="#E01414"/><path d="M214.8 322.9 L210.8 326.6 L214.8 330.3 Z" fill="#E01414"/>
<circle cx="231.3" cy="326.6" r="3" fill="#1414E6"/>
<path d="M232.2 295.3 L236.2 295.3 L232.2 302.8 L236.4 302.8" stroke="#6CDC6C" stroke-width="0.9" fill="none"/>
<path d="M208 320.3 L211.8 325.8 M211.8 320.3 L208 325.8" stroke="#F06060" stroke-width="0.8" fill="none"/>
<path d="M232.6 320.2 L234.4 322.6 L236.3 320.2 M234.4 322.6 L234.4 324.6" stroke="#5050E8" stroke-width="0.8" fill="none"/>
</g>
</svg></body></html>
